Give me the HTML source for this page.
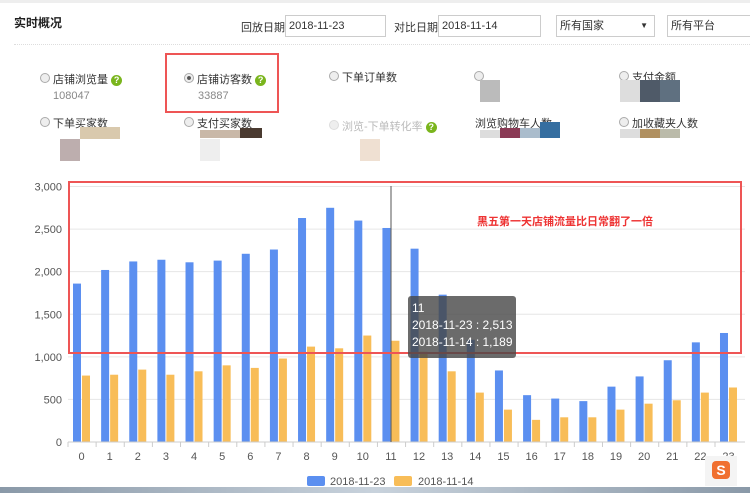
<!DOCTYPE html>
<html><head><meta charset="utf-8">
<style>
body{margin:0;width:750px;height:493px;overflow:hidden;background:#fff;font-family:"Liberation Sans","Noto Sans CJK SC",sans-serif;position:relative;font-size:11px;color:#333}
.a{position:absolute;white-space:nowrap}
.inp{position:absolute;border:1px solid #ccc;height:20px;line-height:20px;padding-left:3px;font-size:11px;color:#333;background:#fff}
.rad{position:absolute;width:8px;height:8px;border:1px solid #aaa;border-radius:50%;background:#eee}
.q{display:inline-block;width:11px;height:11px;border-radius:50%;background:#7ab51d;color:#fff;font-size:9px;line-height:11px;text-align:center;font-weight:bold;vertical-align:middle}
.blk{position:absolute}
</style></head><body>
<div class="a" style="left:0;top:0;width:750px;height:3px;background:#eee"></div>
<div class="a" style="left:14px;top:14px;font-weight:bold;font-size:12px;color:#222">实时概况</div>
<div class="a" style="left:241px;top:19px">回放日期</div>
<div class="inp" style="left:285px;top:15px;width:96px">2018-11-23</div>
<div class="a" style="left:394px;top:19px">对比日期</div>
<div class="inp" style="left:438px;top:15px;width:98px">2018-11-14</div>
<div class="inp" style="left:556px;top:15px;width:94px">所有国家<span style="position:absolute;right:6px;font-size:8px">▼</span></div>
<div class="inp" style="left:667px;top:15px;width:90px">所有平台</div>
<div class="a" style="left:14px;top:44px;width:736px;border-top:1px dotted #ddd"></div>

<div class="rad" style="left:40px;top:73px"></div><div class="a" style="left:53px;top:71px">店铺浏览量 <span class="q">?</span></div>
<div class="a" style="left:53px;top:90px;color:#888">108047</div>
<div class="a" style="left:165px;top:53px;width:110px;height:56px;border:2px solid #e55"></div>
<div class="rad" style="left:184px;top:73px;background:radial-gradient(#555 30%,#eee 40%)"></div><div class="a" style="left:197px;top:71px">店铺访客数 <span class="q">?</span></div>
<div class="a" style="left:198px;top:90px;color:#888">33887</div>
<div class="rad" style="left:329px;top:71px"></div><div class="a" style="left:342px;top:69px">下单订单数</div>
<div class="rad" style="left:474px;top:71px"></div>
<div class="blk" style="left:480px;top:80px;width:20px;height:22px;background:#bbb"></div>
<div class="rad" style="left:619px;top:71px"></div><div class="a" style="left:632px;top:69px">支付金额</div>
<div class="blk" style="left:620px;top:80px;width:20px;height:22px;background:#ddd"></div>
<div class="blk" style="left:640px;top:80px;width:20px;height:22px;background:#4f5a68"></div>
<div class="blk" style="left:660px;top:80px;width:20px;height:22px;background:#5f7080"></div>

<div class="rad" style="left:40px;top:117px"></div><div class="a" style="left:53px;top:115px">下单买家数</div>
<div class="blk" style="left:80px;top:127px;width:40px;height:12px;background:#d9c9ad"></div>
<div class="blk" style="left:60px;top:139px;width:20px;height:22px;background:#bdaeae"></div>
<div class="rad" style="left:184px;top:117px"></div><div class="a" style="left:197px;top:115px">支付买家数</div>
<div class="blk" style="left:200px;top:130px;width:40px;height:8px;background:#c9b8a8"></div>
<div class="blk" style="left:240px;top:128px;width:22px;height:10px;background:#4a3a30"></div>
<div class="blk" style="left:200px;top:139px;width:20px;height:22px;background:#eee"></div>
<div class="rad" style="left:329px;top:120px;border-color:#ddd"></div><div class="a" style="left:342px;top:118px;color:#bbb">浏览-下单转化率 <span class="q">?</span></div>
<div class="blk" style="left:360px;top:139px;width:20px;height:22px;background:#efe0d2"></div>
<div class="a" style="left:475px;top:115px">浏览购物车人数</div>
<div class="blk" style="left:480px;top:130px;width:20px;height:8px;background:#ddd"></div>
<div class="blk" style="left:500px;top:128px;width:20px;height:10px;background:#8a3a55"></div>
<div class="blk" style="left:520px;top:128px;width:20px;height:10px;background:#aabccc"></div>
<div class="blk" style="left:540px;top:122px;width:20px;height:16px;background:#356ea0"></div>
<div class="rad" style="left:619px;top:117px"></div><div class="a" style="left:632px;top:115px">加收藏夹人数</div>
<div class="blk" style="left:620px;top:129px;width:20px;height:9px;background:#ddd"></div>
<div class="blk" style="left:640px;top:129px;width:20px;height:9px;background:#b09060"></div>
<div class="blk" style="left:660px;top:129px;width:20px;height:9px;background:#bba"></div>

<svg class="a" style="left:0;top:0" width="750" height="493" id="ch" font-family="Liberation Sans" font-size="11"></svg>
<div class="a" style="left:68px;top:181px;width:670px;height:169px;border:2px solid #e55"></div>
<div class="a" style="left:477px;top:213px;color:#e33;font-size:11px;font-weight:bold">黑五第一天店铺流量比日常翻了一倍</div>
<div class="a" style="left:408px;top:296px;width:104px;height:58px;background:rgba(70,70,70,0.8);border-radius:3px;color:#fff;font-size:12px;line-height:17px;padding:4px 0 0 4px">11<br>2018-11-23 : 2,513<br>2018-11-14 : 1,189</div>
<div class="a" style="left:705px;top:456px;width:32px;height:30px;background:#f4f4f4"><div style="margin:5px 7px;width:18px;height:18px;border-radius:4px;background:#f07030;color:#fff;font-weight:bold;font-size:14px;text-align:center;line-height:18px">S</div></div>
<div class="a" style="left:0;top:487px;width:750px;height:6px;background:linear-gradient(90deg,#8a99a8,#c8d2dc,#8a99a8)"></div>
<script>
var b=[1860,2020,2120,2140,2110,2130,2210,2260,2630,2750,2600,2513,2270,1730,1200,840,550,510,480,650,770,960,1170,1280];
var o=[780,790,850,790,830,900,870,980,1120,1100,1250,1189,1060,830,580,380,260,290,290,380,450,490,580,640];
var s='',y0=442,k=255.5/3000;
for(var i=0;i<=6;i++){var y=y0-i*500*k;s+='<line x1="68" x2="745" y1="'+y+'" y2="'+y+'" stroke="#e6e6e6"/><text x="62" y="'+(y+4)+'" text-anchor="end" fill="#555">'+(i*500).toLocaleString('en')+'</text>';}
for(var i=0;i<24;i++){var x=68+i*28.13;
s+='<rect x="'+(x+5)+'" y="'+(y0-b[i]*k)+'" width="8" height="'+b[i]*k+'" fill="#5b8ff0"/>';
s+='<rect x="'+(x+14)+'" y="'+(y0-o[i]*k)+'" width="8" height="'+o[i]*k+'" fill="#f8bd58"/>';
s+='<line x1="'+x+'" x2="'+x+'" y1="442" y2="447" stroke="#ccc"/><text x="'+(x+13.5)+'" y="460" text-anchor="middle" fill="#555">'+i+'</text>';}
s+='<line x1="68" x2="745" y1="442" y2="442" stroke="#ccc"/><line x1="391" x2="391" y1="186" y2="442" stroke="#555"/>';
s+='<rect x="307" y="476" width="18" height="10" rx="2" fill="#5b8ff0"/><text x="330" y="485" fill="#555">2018-11-23</text><rect x="394" y="476" width="18" height="10" rx="2" fill="#f8bd58"/><text x="418" y="485" fill="#555">2018-11-14</text>';
document.getElementById('ch').innerHTML=s;
</script>
</body></html>
